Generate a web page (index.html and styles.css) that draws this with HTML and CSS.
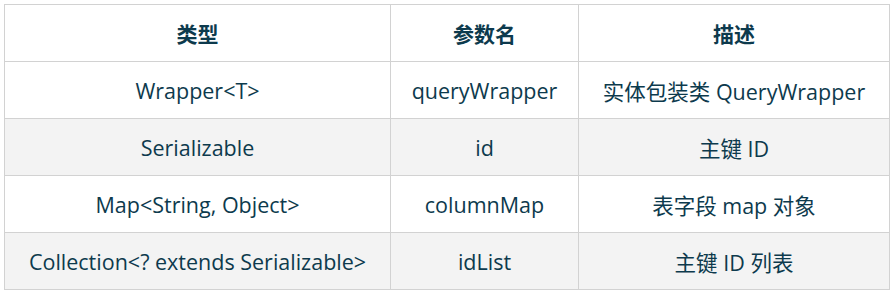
FILE: index.html
```html
<!DOCTYPE html>
<html lang="zh">
<head>
<meta charset="utf-8">
<link rel="stylesheet" href="styles.css">
</head>
<body>
<div class="wrap">
<table class="params">
  <colgroup>
    <col class="c1"><col class="c2"><col class="c3">
  </colgroup>
  <thead>
    <tr><th>类型</th><th>参数名</th><th>描述</th></tr>
  </thead>
  <tbody>
    <tr><td>Wrapper&lt;T&gt;</td><td>queryWrapper</td><td>实体包装类 QueryWrapper</td></tr>
    <tr class="alt"><td>Serializable</td><td>id</td><td>主键 ID</td></tr>
    <tr><td>Map&lt;String, Object&gt;</td><td>columnMap</td><td>表字段 map 对象</td></tr>
    <tr class="alt"><td>Collection&lt;? extends Serializable&gt;</td><td>idList</td><td>主键 ID 列表</td></tr>
  </tbody>
</table>
</div>
</body>
</html>
```

FILE: styles.css
```css
html, body {
  margin: 0;
  padding: 0;
  background: #ffffff;
}
.wrap {
  padding: 4px 0 0 4px;
}
.params {
  border-collapse: collapse;
  table-layout: fixed;
  width: 885px;
  font-family: "Open Sans", "Noto Sans CJK SC", sans-serif;
  font-size: 21.5px;
  color: #0d3a4d;
}
.c1 { width: 386px; }
.c2 { width: 188px; }
.c3 { width: 311px; }
.params th, .params td {
  border: 1px solid #d2d2d2;
  height: 57px;
  padding: 0 4px;
  text-align: center;
  vertical-align: middle;
  box-sizing: border-box;
  white-space: nowrap;
}
.params th {
  font-weight: 700;
  font-size: 21px;
}
.params tr.alt td {
  background: #f3f3f3;
}
```
